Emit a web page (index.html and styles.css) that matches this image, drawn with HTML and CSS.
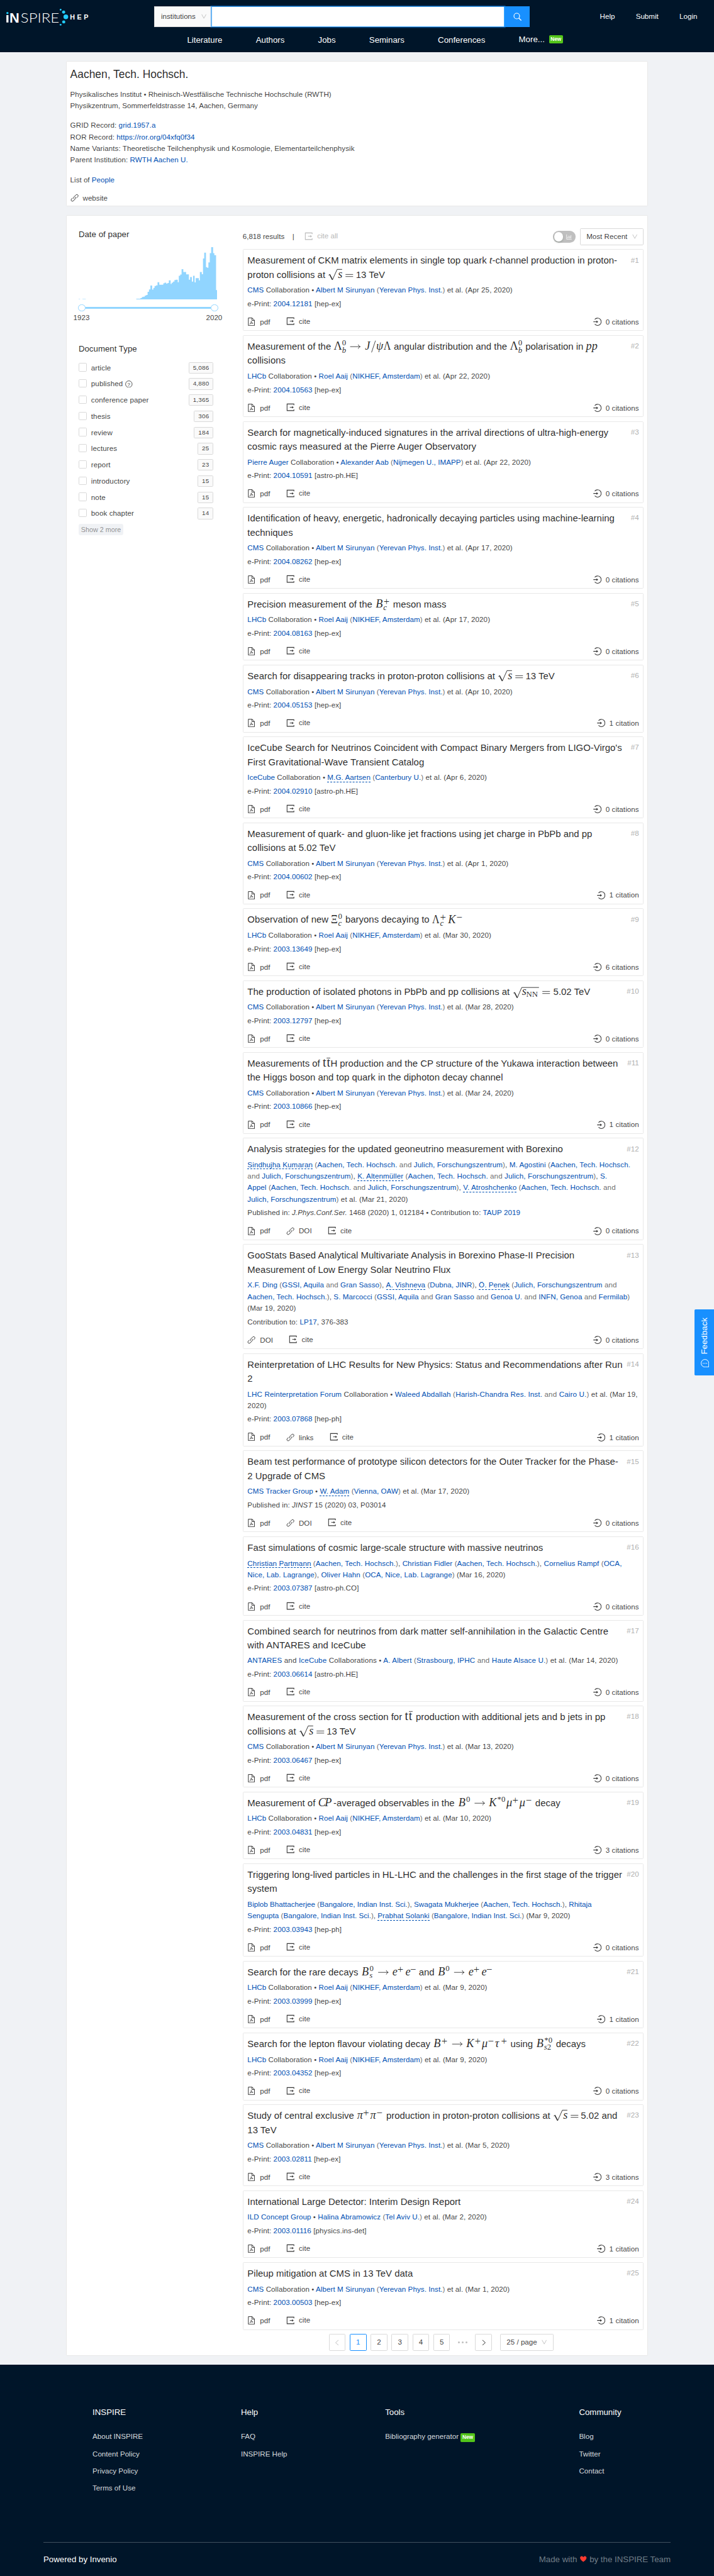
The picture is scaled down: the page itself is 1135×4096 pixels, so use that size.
FILE: index.html
```html
<!DOCTYPE html>
<html lang="en">
<head>
<meta charset="utf-8">
<title>Aachen, Tech. Hochsch. - INSPIRE</title>
<link rel="stylesheet" href="styles.css">
</head>
<body>
<svg class="defs" aria-hidden="true">
  <symbol id="pdf" viewBox="0 0 16 16"><path d="M2.2.7h7.3l4.3 4.4v10.2H2.2zM9.2.9v4.5h4.4" fill="none" stroke="currentColor" stroke-width="1.2"/><path d="M7.7 6.8c-.3 2.600-1.300 4.500-2.900 6M7.700 7c.2 2.200 1.300 3.700 3.500 4.200M5.600 11.900c1.600-1 3.400-1.400 5.400-1" fill="none" stroke="currentColor" stroke-width=".9"/></symbol>
  <symbol id="cite" viewBox="0 0 16 16"><path d="M14.700 3.900V1.700H1.600v12.600h13.100v-2.200" fill="none" stroke="currentColor" stroke-width="1.300"/><path d="M6.800 8h5" stroke="currentColor" stroke-width="1.200"/><path d="M11.200 5.800 14.400 8l-3.200 2.200z" fill="currentColor"/></symbol>
  <symbol id="link" viewBox="0 0 16 16"><path d="M6.900 9.900C5.700 8.700 5.800 7.100 7 5.900l3.200-3.300c1.200-1.200 2.700-1.300 3.800-.3 1 1.100.9 2.600-.3 3.800l-1.800 1.800M9.100 6.100c1.200 1.200 1.100 2.800-.1 4l-3.200 3.300c-1.200 1.200-2.700 1.300-3.800.3-1-1.100-.9-2.600.3-3.800l1.800-1.800" fill="none" stroke="currentColor" stroke-width="1.200"/></symbol>
  <symbol id="login" viewBox="0 0 16 16"><path d="M3 3.400A7 7 0 1 1 3 12.600" fill="none" stroke="currentColor" stroke-width="1.300"/><path d="M.3 8H7" stroke="currentColor" stroke-width="1.300"/><path d="M6.300 5.500 9.500 8l-3.200 2.500z" fill="currentColor"/></symbol>
  <symbol id="down" viewBox="0 0 10 10"><path d="M.8 1 5 8.600 9.200 1" fill="none" stroke="#bfbfbf" stroke-width="1.100"/></symbol>
  <symbol id="to" viewBox="0 0 20 10" overflow="visible"><path d="M0 5h19M15.500 1c.6 2 1.800 3.300 3.800 4-2 .7-3.200 2-3.800 4" fill="none" stroke="currentColor" stroke-width="1"/></symbol>
  <symbol id="root" viewBox="0 0 54 26"><path d="M1.500 14l2.500-1.800" fill="none" stroke="currentColor" stroke-width="1"/><path d="M3.700 12.500 8.800 22.500" stroke="currentColor" stroke-width="1.800"/><path d="M8.900 23 18 2.800h9.500" fill="none" stroke="currentColor" stroke-width="1.100"/><text x="19.500" y="19" font-style="italic">s</text><path d="M34 12.500h14.500M34 16.500h14.500" stroke="currentColor" stroke-width="1"/></symbol>
</svg>

<div class="page">
<header class="header">
  <div class="header-top">
    <svg class="logo" viewBox="0 0 180 60">
      <circle cx="14.200" cy="25" r="2.100" fill="#16c8f5"/>
      <path d="M12.200 29h4v14h-4z" fill="#fff"/>
      <text x="18" y="43" class="logo-b" textLength="19" lengthAdjust="spacingAndGlyphs">N</text>
      <text x="39.500" y="43" class="logo-l" textLength="74" lengthAdjust="spacingAndGlyphs">SPIRE</text>
      <g fill="#22ccff"><circle cx="116" cy="18.700" r="1.700"/><circle cx="121.800" cy="23.300" r="3"/><circle cx="126" cy="32.300" r="4.500"/><circle cx="122" cy="42" r="3"/><circle cx="116" cy="47.400" r="1.700"/></g>
      <text x="134" y="37" class="logo-s" textLength="35">HEP</text>
    </svg>
    <div class="search">
      <div class="search-type"><span>institutions</span><svg class="caret"><use href="#down"/></svg></div>
      <div class="search-input"></div>
      <div class="search-btn"><svg viewBox="0 0 16 16"><circle cx="6.600" cy="6.600" r="5.400" fill="none" stroke="#fff" stroke-width="1.400"/><path d="m10.500 10.500 4.700 4.700" stroke="#fff" stroke-width="1.600"/></svg></div>
    </div>
    <div class="account"><a>Help</a><a>Submit</a><a>Login</a></div>
  </div>
  <nav class="nav"><a>Literature</a><a>Authors</a><a>Jobs</a><a>Seminars</a><a>Conferences</a><a class="more">More...<b class="new">New</b></a></nav>
</header>

<main>
<section class="card info">
  <h1>Aachen, Tech. Hochsch.</h1>
  <p>Physikalisches Institut • Rheinisch-Westfälische Technische Hochschule (RWTH)<br>Physikzentrum, Sommerfeldstrasse 14, Aachen, Germany</p>
  <p class="ids">GRID Record: <a>grid.1957.a</a><br>ROR Record: <a>https://ror.org/04xfq0f34</a><br>Name Variants: Theoretische Teilchenphysik und Kosmologie, Elementarteilchenphysik<br>Parent Institution: <a>RWTH Aachen U.</a></p>
  <p>List of <a>People</a></p>
  <div class="website"><svg class="ic"><use href="#link"/></svg>website</div>
</section>

<section class="card search-page">
<aside>
  <h2>Date of paper</h2>
  <svg class="histogram" viewBox="90 180 795 246" preserveAspectRatio="none"><path fill="#91d5ff" d="M90 426v-2h8v2zM112 426v-2h19v2zM421 426V423H445V420H453V415H461V413H470V408H478V405H486V390H494V379H502V361H512V380H519V372H526V363H534V360H543V345H553V357H576V350H583V347H593V352H600V349H608V336H618V353H624V347H632V342H640V335H648V333H659V345H665V315H673V309H681V284H691V297H707V308H723V333H730V321H740V342H747V315H756V346H762V326H780V336H786V297H797V307H804V233H811V206H821V274H828V277H835V252H843V208H851V180H862V208H869V218H879V382H885V426z"/></svg>
  <div class="slider"><i></i><b></b><i></i></div>
  <div class="years"><span>1923</span><span>2020</span></div>
  <h2 class="doctype">Document Type</h2>
  <ul class="facets">
    <li><i></i>article<b>5,086</b></li>
    <li><i></i>published<svg class="help" viewBox="0 0 14 14"><circle cx="7" cy="7" r="6.300" fill="none" stroke="#444" stroke-width="1.100"/><text x="7" y="10.300" text-anchor="middle" font-size="9.500" fill="#333">?</text></svg><b>4,880</b></li>
    <li><i></i>conference paper<b>1,365</b></li>
    <li><i></i>thesis<b>306</b></li>
    <li><i></i>review<b>184</b></li>
    <li><i></i>lectures<b>25</b></li>
    <li><i></i>report<b>23</b></li>
    <li><i></i>introductory<b>15</b></li>
    <li><i></i>note<b>15</b></li>
    <li><i></i>book chapter<b>14</b></li>
  </ul>
  <span class="show-more">Show 2 more</span>
</aside>

<div class="results">
<div class="toolbar">
  <span>6,818 results</span><span class="bar">|</span>
  <span class="cite-all"><svg class="ic"><use href="#cite"/></svg>cite all</span>
  <span class="toggle"><i></i><svg viewBox="0 0 12 12"><path d="M1 1v10h10.500M3.500 9V6M5.700 9V3.500M7.900 9V5M10 9V2.500" fill="none" stroke="#fff" stroke-width="1"/></svg></span>
  <span class="select sort">Most Recent<svg class="caret"><use href="#down"/></svg></span>
</div>

<article><h3>Measurement of CKM matrix elements in single top quark <i class="m sm">t</i>-channel production in proton-<br>proton collisions at <svg class="f" width="53.500" viewBox="0 0 53.500 26"><use href="#root" width="54" height="26"/></svg>13 TeV</h3><em>#1</em>
<p><a>CMS</a> Collaboration • <a>Albert M Sirunyan</a> <s>(</s><a>Yerevan Phys. Inst.</a><s>)</s> et al. (Apr 25, 2020)</p><p>e-Print: <a>2004.12181</a> [hep-ex]</p>
<footer><span><svg class="ic"><use href="#pdf"/></svg>pdf</span><span class="c"><svg class="ic"><use href="#cite"/></svg>cite</span><span class="n"><svg class="ic"><use href="#login"/></svg>0 citations</span></footer></article>

<article><h3>Measurement of the <svg class="f" width="110" viewBox="0 0 110 26"><text x=".5" y="19">Λ</text><text class="x" x="16.500" y="11">0</text><text class="x" x="16.500" y="25"><tspan font-style="italic">b</tspan></text><use href="#to" x="32" y="8.500" width="20" height="10"/><g font-style="italic"><text x="60.500" y="19">J</text><text x="82" y="19" textLength="13.500" lengthAdjust="spacingAndGlyphs">ψ</text></g><path d="M73 24.500 80.500 2" stroke="currentColor" stroke-width="1"/><text x="96" y="19" textLength="14" lengthAdjust="spacingAndGlyphs">Λ</text></svg> angular distribution and the <svg class="f" width="25" viewBox="0 0 25 26"><text x=".5" y="19">Λ</text><text class="x" x="16.500" y="11">0</text><text class="x" x="16.500" y="25" font-style="italic">b</text></svg> polarisation in <i class="m">pp</i><br>collisions</h3><em>#2</em>
<p><a>LHCb</a> Collaboration • <a>Roel Aaij</a> <s>(</s><a>NIKHEF, Amsterdam</a><s>)</s> et al. (Apr 22, 2020)</p><p>e-Print: <a>2004.10563</a> [hep-ex]</p>
<footer><span><svg class="ic"><use href="#pdf"/></svg>pdf</span><span class="c"><svg class="ic"><use href="#cite"/></svg>cite</span><span class="n"><svg class="ic"><use href="#login"/></svg>0 citations</span></footer></article>

<article><h3>Search for magnetically-induced signatures in the arrival directions of ultra-high-energy<br>cosmic rays measured at the Pierre Auger Observatory</h3><em>#3</em>
<p><a>Pierre Auger</a> Collaboration • <a>Alexander Aab</a> <s>(</s><a>Nijmegen U., IMAPP</a><s>)</s> et al. (Apr 22, 2020)</p><p>e-Print: <a>2004.10591</a> [astro-ph.HE]</p>
<footer><span><svg class="ic"><use href="#pdf"/></svg>pdf</span><span class="c"><svg class="ic"><use href="#cite"/></svg>cite</span><span class="n"><svg class="ic"><use href="#login"/></svg>0 citations</span></footer></article>

<article><h3>Identification of heavy, energetic, hadronically decaying particles using machine-learning<br>techniques</h3><em>#4</em>
<p><a>CMS</a> Collaboration • <a>Albert M Sirunyan</a> <s>(</s><a>Yerevan Phys. Inst.</a><s>)</s> et al. (Apr 17, 2020)</p><p>e-Print: <a>2004.08262</a> [hep-ex]</p>
<footer><span><svg class="ic"><use href="#pdf"/></svg>pdf</span><span class="c"><svg class="ic"><use href="#cite"/></svg>cite</span><span class="n"><svg class="ic"><use href="#login"/></svg>0 citations</span></footer></article>

<article><h3>Precision measurement of the <svg class="f" width="29.700" viewBox="0 0 29.700 26"><text x="1.500" y="19" font-style="italic">B</text><text class="pm" x="16.500" y="14.500">+</text><text class="x" x="16" y="24.500" font-style="italic">c</text></svg> meson mass</h3><em>#5</em>
<p><a>LHCb</a> Collaboration • <a>Roel Aaij</a> <s>(</s><a>NIKHEF, Amsterdam</a><s>)</s> et al. (Apr 17, 2020)</p><p>e-Print: <a>2004.08163</a> [hep-ex]</p>
<footer><span><svg class="ic"><use href="#pdf"/></svg>pdf</span><span class="c"><svg class="ic"><use href="#cite"/></svg>cite</span><span class="n"><svg class="ic"><use href="#login"/></svg>0 citations</span></footer></article>

<article><h3>Search for disappearing tracks in proton-proton collisions at <svg class="f" width="53.500" viewBox="0 0 53.500 26"><use href="#root" width="54" height="26"/></svg>13 TeV</h3><em>#6</em>
<p><a>CMS</a> Collaboration • <a>Albert M Sirunyan</a> <s>(</s><a>Yerevan Phys. Inst.</a><s>)</s> et al. (Apr 10, 2020)</p><p>e-Print: <a>2004.05153</a> [hep-ex]</p>
<footer><span><svg class="ic"><use href="#pdf"/></svg>pdf</span><span class="c"><svg class="ic"><use href="#cite"/></svg>cite</span><span class="n"><svg class="ic"><use href="#login"/></svg>1 citation</span></footer></article>

<article><h3>IceCube Search for Neutrinos Coincident with Compact Binary Mergers from LIGO-Virgo's<br>First Gravitational-Wave Transient Catalog</h3><em>#7</em>
<p><a>IceCube</a> Collaboration • <a class="d">M.G. Aartsen</a> <s>(</s><a>Canterbury U.</a><s>)</s> et al. (Apr 6, 2020)</p><p>e-Print: <a>2004.02910</a> [astro-ph.HE]</p>
<footer><span><svg class="ic"><use href="#pdf"/></svg>pdf</span><span class="c"><svg class="ic"><use href="#cite"/></svg>cite</span><span class="n"><svg class="ic"><use href="#login"/></svg>0 citations</span></footer></article>

<article><h3>Measurement of quark- and gluon-like jet fractions using jet charge in PbPb and pp<br>collisions at 5.02 TeV</h3><em>#8</em>
<p><a>CMS</a> Collaboration • <a>Albert M Sirunyan</a> <s>(</s><a>Yerevan Phys. Inst.</a><s>)</s> et al. (Apr 1, 2020)</p><p>e-Print: <a>2004.00602</a> [hep-ex]</p>
<footer><span><svg class="ic"><use href="#pdf"/></svg>pdf</span><span class="c"><svg class="ic"><use href="#cite"/></svg>cite</span><span class="n"><svg class="ic"><use href="#login"/></svg>1 citation</span></footer></article>

<article><h3>Observation of new <svg class="f" width="22.400" viewBox="0 0 22.400 26"><text x="0" y="19" textLength="13" lengthAdjust="spacingAndGlyphs">Ξ</text><text class="x" x="13.800" y="11">0</text><text class="x" x="13.800" y="24.500" font-style="italic">c</text></svg> baryons decaying to <svg class="f" width="58" viewBox="0 0 58 26"><text x="0" y="19" textLength="14" lengthAdjust="spacingAndGlyphs">Λ</text><text class="pm" x="15" y="14.500">+</text><text class="x" x="15" y="24.500" font-style="italic">c</text><text x="30.500" y="19" font-style="italic">K</text><text class="pm" x="46.500" y="14.500">−</text></svg></h3><em>#9</em>
<p><a>LHCb</a> Collaboration • <a>Roel Aaij</a> <s>(</s><a>NIKHEF, Amsterdam</a><s>)</s> et al. (Mar 30, 2020)</p><p>e-Print: <a>2003.13649</a> [hep-ex]</p>
<footer><span><svg class="ic"><use href="#pdf"/></svg>pdf</span><span class="c"><svg class="ic"><use href="#cite"/></svg>cite</span><span class="n"><svg class="ic"><use href="#login"/></svg>6 citations</span></footer></article>

<article><h3>The production of isolated photons in PbPb and pp collisions at <svg class="f" width="78.500" viewBox="0 0 78.500 26"><path d="M2.500 16l2.500-1.800" fill="none" stroke="currentColor" stroke-width="1"/><path d="M4.700 14.500 9.800 24.500" stroke="currentColor" stroke-width="1.800"/><path d="M9.900 25 18.500 5h33" fill="none" stroke="currentColor" stroke-width="1.100"/><text x="19" y="19" font-style="italic">s</text><text class="x" x="27" y="22.500">NN</text><path d="M58 12.500h14.500M58 16.500h14.500" stroke="currentColor" stroke-width="1"/></svg>5.02 TeV</h3><em>#10</em>
<p><a>CMS</a> Collaboration • <a>Albert M Sirunyan</a> <s>(</s><a>Yerevan Phys. Inst.</a><s>)</s> et al. (Mar 28, 2020)</p><p>e-Print: <a>2003.12797</a> [hep-ex]</p>
<footer><span><svg class="ic"><use href="#pdf"/></svg>pdf</span><span class="c"><svg class="ic"><use href="#cite"/></svg>cite</span><span class="n"><svg class="ic"><use href="#login"/></svg>0 citations</span></footer></article>

<article><h3>Measurements of <svg class="f" width="15" viewBox="0 0 15 26"><text x="0" y="19" font-size="24">t</text><text x="7.700" y="19" font-size="24">t</text><path d="M7.500 2.800h7" stroke="currentColor"/></svg>H production and the CP structure of the Yukawa interaction between<br>the Higgs boson and top quark in the diphoton decay channel</h3><em>#11</em>
<p><a>CMS</a> Collaboration • <a>Albert M Sirunyan</a> <s>(</s><a>Yerevan Phys. Inst.</a><s>)</s> et al. (Mar 24, 2020)</p><p>e-Print: <a>2003.10866</a> [hep-ex]</p>
<footer><span><svg class="ic"><use href="#pdf"/></svg>pdf</span><span class="c"><svg class="ic"><use href="#cite"/></svg>cite</span><span class="n"><svg class="ic"><use href="#login"/></svg>1 citation</span></footer></article>

<article><h3>Analysis strategies for the updated geoneutrino measurement with Borexino</h3><em>#12</em>
<p class="w2"><a class="d">Sindhujha Kumaran</a> <s>(</s><a>Aachen, Tech. Hochsch.</a> <s>and</s> <a>Julich, Forschungszentrum</a><s>)</s>, <a>M. Agostini</a> <s>(</s><a>Aachen, Tech. Hochsch.</a><br><s>and</s> <a>Julich, Forschungszentrum</a><s>)</s>, <a class="d">K. Altenmüller</a> <s>(</s><a>Aachen, Tech. Hochsch.</a> <s>and</s> <a>Julich, Forschungszentrum</a><s>)</s>, <a>S.<br>Appel</a> <s>(</s><a>Aachen, Tech. Hochsch.</a> <s>and</s> <a>Julich, Forschungszentrum</a><s>)</s>, <a class="d">V. Atroshchenko</a> <s>(</s><a>Aachen, Tech. Hochsch.</a> <s>and</s><br><a>Julich, Forschungszentrum</a><s>)</s> et al. (Mar 21, 2020)</p><p>Published in: <i>J.Phys.Conf.Ser.</i> 1468 (2020) 1, 012184 • Contribution to: <a>TAUP 2019</a></p>
<footer><span><svg class="ic"><use href="#pdf"/></svg>pdf</span><span><svg class="ic"><use href="#link"/></svg>DOI</span><span class="c"><svg class="ic"><use href="#cite"/></svg>cite</span><span class="n"><svg class="ic"><use href="#login"/></svg>0 citations</span></footer></article>

<article><h3>GooStats Based Analytical Multivariate Analysis in Borexino Phase-II Precision<br>Measurement of Low Energy Solar Neutrino Flux</h3><em>#13</em>
<p><a>X.F. Ding</a> <s>(</s><a>GSSI, Aquila</a> <s>and</s> <a>Gran Sasso</a><s>)</s>, <a class="d">A. Vishneva</a> <s>(</s><a>Dubna, JINR</a><s>)</s>, <a class="d">Ö. Penek</a> <s>(</s><a>Julich, Forschungszentrum</a> <s>and</s><br><a>Aachen, Tech. Hochsch.</a><s>)</s>, <a>S. Marcocci</a> <s>(</s><a>GSSI, Aquila</a> <s>and</s> <a>Gran Sasso</a> <s>and</s> <a>Genoa U.</a> <s>and</s> <a>INFN, Genoa</a> <s>and</s> <a>Fermilab</a><s>)</s><br>(Mar 19, 2020)</p><p>Contribution to: <a>LP17</a>, 376-383</p>
<footer><span><svg class="ic"><use href="#link"/></svg>DOI</span><span class="c"><svg class="ic"><use href="#cite"/></svg>cite</span><span class="n"><svg class="ic"><use href="#login"/></svg>0 citations</span></footer></article>

<article><h3>Reinterpretation of LHC Results for New Physics: Status and Recommendations after Run<br>2</h3><em>#14</em>
<p class="w3"><a>LHC Reinterpretation Forum</a> Collaboration • <a>Waleed Abdallah</a> <s>(</s><a>Harish-Chandra Res. Inst.</a> <s>and</s> <a>Cairo U.</a><s>)</s> et al. (Mar 19,<br>2020)</p><p>e-Print: <a>2003.07868</a> [hep-ph]</p>
<footer><span class="c"><svg class="ic"><use href="#pdf"/></svg>pdf</span><span><svg class="ic"><use href="#link"/></svg>links</span><span class="c"><svg class="ic"><use href="#cite"/></svg>cite</span><span class="n"><svg class="ic"><use href="#login"/></svg>1 citation</span></footer></article>

<article><h3>Beam test performance of prototype silicon detectors for the Outer Tracker for the Phase-<br>2 Upgrade of CMS</h3><em>#15</em>
<p><a>CMS Tracker Group</a> • <a class="d">W. Adam</a> <s>(</s><a>Vienna, OAW</a><s>)</s> et al. (Mar 17, 2020)</p><p>Published in: <i>JINST</i> 15 (2020) 03, P03014</p>
<footer><span><svg class="ic"><use href="#pdf"/></svg>pdf</span><span><svg class="ic"><use href="#link"/></svg>DOI</span><span class="c"><svg class="ic"><use href="#cite"/></svg>cite</span><span class="n"><svg class="ic"><use href="#login"/></svg>0 citations</span></footer></article>

<article><h3>Fast simulations of cosmic large-scale structure with massive neutrinos</h3><em>#16</em>
<p class="w2"><a class="d">Christian Partmann</a> <s>(</s><a>Aachen, Tech. Hochsch.</a><s>)</s>, <a>Christian Fidler</a> <s>(</s><a>Aachen, Tech. Hochsch.</a><s>)</s>, <a>Cornelius Rampf</a> <s>(</s><a>OCA,<br>Nice, Lab. Lagrange</a><s>)</s>, <a>Oliver Hahn</a> <s>(</s><a>OCA, Nice, Lab. Lagrange</a><s>)</s> (Mar 16, 2020)</p><p>e-Print: <a>2003.07387</a> [astro-ph.CO]</p>
<footer><span><svg class="ic"><use href="#pdf"/></svg>pdf</span><span class="c"><svg class="ic"><use href="#cite"/></svg>cite</span><span class="n"><svg class="ic"><use href="#login"/></svg>0 citations</span></footer></article>

<article><h3>Combined search for neutrinos from dark matter self-annihilation in the Galactic Centre<br>with ANTARES and IceCube</h3><em>#17</em>
<p class="w3"><a>ANTARES</a> and <a>IceCube</a> Collaborations • <a>A. Albert</a> <s>(</s><a>Strasbourg, IPHC</a> <s>and</s> <a>Haute Alsace U.</a><s>)</s> et al. (Mar 14, 2020)</p><p>e-Print: <a>2003.06614</a> [astro-ph.HE]</p>
<footer><span><svg class="ic"><use href="#pdf"/></svg>pdf</span><span class="c"><svg class="ic"><use href="#cite"/></svg>cite</span><span class="n"><svg class="ic"><use href="#login"/></svg>0 citations</span></footer></article>

<article><h3>Measurement of the cross section for <svg class="f" width="16.300" viewBox="0 0 16.300 26"><text x=".5" y="19" font-size="24">t</text><text x="8.200" y="19" font-size="24">t</text><path d="M8.500 2.800h7" stroke="currentColor"/></svg> production with additional jets and b jets in pp<br>collisions at <svg class="f" width="53.500" viewBox="0 0 53.500 26"><use href="#root" width="54" height="26"/></svg>13 TeV</h3><em>#18</em>
<p><a>CMS</a> Collaboration • <a>Albert M Sirunyan</a> <s>(</s><a>Yerevan Phys. Inst.</a><s>)</s> et al. (Mar 13, 2020)</p><p>e-Print: <a>2003.06467</a> [hep-ex]</p>
<footer><span><svg class="ic"><use href="#pdf"/></svg>pdf</span><span class="c"><svg class="ic"><use href="#cite"/></svg>cite</span><span class="n"><svg class="ic"><use href="#login"/></svg>0 citations</span></footer></article>

<article><h3>Measurement of <svg class="f" width="29.500" viewBox="0 0 29.500 26"><g font-style="italic"><text x="1" y="19">C</text><text x="13.500" y="19">P</text></g></svg>-averaged observables in the <svg class="f" width="144.400" viewBox="0 0 144.400 26"><g font-style="italic"><text x="2" y="19">B</text><text x="60.500" y="19">K</text><text x="94" y="19">μ</text><text x="119" y="19">μ</text></g><text class="x" x="16.800" y="11">0</text><use href="#to" x="33" y="8.500" width="20" height="10"/><text class="x" x="76.500" y="11">*0</text><text class="pm" x="105.500" y="14.500">+</text><text class="pm" x="130.800" y="14.500">−</text></svg> decay</h3><em>#19</em>
<p><a>LHCb</a> Collaboration • <a>Roel Aaij</a> <s>(</s><a>NIKHEF, Amsterdam</a><s>)</s> et al. (Mar 10, 2020)</p><p>e-Print: <a>2003.04831</a> [hep-ex]</p>
<footer><span><svg class="ic"><use href="#pdf"/></svg>pdf</span><span class="c"><svg class="ic"><use href="#cite"/></svg>cite</span><span class="n"><svg class="ic"><use href="#login"/></svg>3 citations</span></footer></article>

<article><h3>Triggering long-lived particles in HL-LHC and the challenges in the first stage of the trigger<br>system</h3><em>#20</em>
<p class="w1"><a>Biplob Bhattacherjee</a> <s>(</s><a>Bangalore, Indian Inst. Sci.</a><s>)</s>, <a>Swagata Mukherjee</a> <s>(</s><a>Aachen, Tech. Hochsch.</a><s>)</s>, <a>Rhitaja<br>Sengupta</a> <s>(</s><a>Bangalore, Indian Inst. Sci.</a><s>)</s>, <a class="d">Prabhat Solanki</a> <s>(</s><a>Bangalore, Indian Inst. Sci.</a><s>)</s> (Mar 9, 2020)</p><p>e-Print: <a>2003.03943</a> [hep-ph]</p>
<footer><span><svg class="ic"><use href="#pdf"/></svg>pdf</span><span class="c"><svg class="ic"><use href="#cite"/></svg>cite</span><span class="n"><svg class="ic"><use href="#login"/></svg>0 citations</span></footer></article>

<article><h3>Search for the rare decays <svg class="f" width="106" viewBox="0 0 106 26"><g font-style="italic"><text x="1.300" y="19">B</text><text class="x" x="16" y="24.500">s</text><text x="60" y="19">e</text><text x="84.800" y="19">e</text></g><text class="x" x="16.300" y="11">0</text><use href="#to" x="32.700" y="8.500" width="20" height="10"/><text class="pm" x="69.500" y="14.500">+</text><text class="pm" x="94" y="14.500">−</text></svg> and <svg class="f" width="105" viewBox="0 0 105 26"><g font-style="italic"><text x="1.500" y="19">B</text><text x="60" y="19">e</text><text x="84.800" y="19">e</text></g><text class="x" x="16" y="11">0</text><use href="#to" x="32.300" y="8.500" width="20" height="10"/><text class="pm" x="69.500" y="14.500">+</text><text class="pm" x="94" y="14.500">−</text></svg></h3><em>#21</em>
<p><a>LHCb</a> Collaboration • <a>Roel Aaij</a> <s>(</s><a>NIKHEF, Amsterdam</a><s>)</s> et al. (Mar 9, 2020)</p><p>e-Print: <a>2003.03999</a> [hep-ex]</p>
<footer><span><svg class="ic"><use href="#pdf"/></svg>pdf</span><span class="c"><svg class="ic"><use href="#cite"/></svg>cite</span><span class="n"><svg class="ic"><use href="#login"/></svg>1 citation</span></footer></article>

<article><h3>Search for the lepton flavour violating decay <svg class="f" width="143.400" viewBox="0 0 143.400 26"><g font-style="italic"><text x="1.500" y="19">B</text><text x="64" y="19">K</text><text x="94" y="19">μ</text><text x="119" y="19">τ</text></g><use href="#to" x="37" y="8.500" width="20" height="10"/><text class="pm" x="16.500" y="14.500">+</text><text class="pm" x="80.500" y="14.500">+</text><text class="pm" x="105.300" y="14.500">−</text><text class="pm" x="130.500" y="14.500">+</text></svg> using <svg class="f" width="34" viewBox="0 0 34 26"><text x="2" y="19" font-style="italic">B</text><text class="x" x="17.300" y="11">*0</text><text class="x" x="16.500" y="24.500"><tspan font-style="italic">s</tspan>2</text></svg> decays</h3><em>#22</em>
<p><a>LHCb</a> Collaboration • <a>Roel Aaij</a> <s>(</s><a>NIKHEF, Amsterdam</a><s>)</s> et al. (Mar 9, 2020)</p><p>e-Print: <a>2003.04352</a> [hep-ex]</p>
<footer><span><svg class="ic"><use href="#pdf"/></svg>pdf</span><span class="c"><svg class="ic"><use href="#cite"/></svg>cite</span><span class="n"><svg class="ic"><use href="#login"/></svg>0 citations</span></footer></article>

<article><h3>Study of central exclusive <svg class="f" width="51.600" viewBox="0 0 51.600 26"><g font-style="italic"><text x="1" y="19">π</text><text x="26" y="19">π</text></g><text class="pm" x="12.300" y="14.500">+</text><text class="pm" x="38" y="14.500">−</text></svg> production in proton-proton collisions at <svg class="f" width="53.500" viewBox="0 0 53.500 26"><use href="#root" width="54" height="26"/></svg>5.02 and<br>13 TeV</h3><em>#23</em>
<p><a>CMS</a> Collaboration • <a>Albert M Sirunyan</a> <s>(</s><a>Yerevan Phys. Inst.</a><s>)</s> et al. (Mar 5, 2020)</p><p>e-Print: <a>2003.02811</a> [hep-ex]</p>
<footer><span><svg class="ic"><use href="#pdf"/></svg>pdf</span><span class="c"><svg class="ic"><use href="#cite"/></svg>cite</span><span class="n"><svg class="ic"><use href="#login"/></svg>3 citations</span></footer></article>

<article><h3>International Large Detector: Interim Design Report</h3><em>#24</em>
<p><a>ILD Concept Group</a> • <a>Halina Abramowicz</a> <s>(</s><a>Tel Aviv U.</a><s>)</s> et al. (Mar 2, 2020)</p><p>e-Print: <a>2003.01116</a> [physics.ins-det]</p>
<footer><span><svg class="ic"><use href="#pdf"/></svg>pdf</span><span class="c"><svg class="ic"><use href="#cite"/></svg>cite</span><span class="n"><svg class="ic"><use href="#login"/></svg>1 citation</span></footer></article>

<article><h3>Pileup mitigation at CMS in 13 TeV data</h3><em>#25</em>
<p><a>CMS</a> Collaboration • <a>Albert M Sirunyan</a> <s>(</s><a>Yerevan Phys. Inst.</a><s>)</s> et al. (Mar 1, 2020)</p><p>e-Print: <a>2003.00503</a> [hep-ex]</p>
<footer><span><svg class="ic"><use href="#pdf"/></svg>pdf</span><span class="c"><svg class="ic"><use href="#cite"/></svg>cite</span><span class="n"><svg class="ic"><use href="#login"/></svg>1 citation</span></footer></article>

<div class="pagination">
  <span class="pg"><svg viewBox="0 0 12 12"><path d="M8.500 1 3 6l5.500 5" fill="none" stroke="#bfbfbf" stroke-width="1.200"/></svg></span><span class="pg on">1</span><span class="pg">2</span><span class="pg">3</span><span class="pg">4</span><span class="pg">5</span>
  <span class="dots"><i></i><i></i><i></i></span>
  <span class="pg"><svg viewBox="0 0 12 12"><path d="M3.500 1 9 6l-5.500 5" fill="none" stroke="#333" stroke-width="1.200"/></svg></span>
  <span class="select size">25 / page<svg class="caret"><use href="#down"/></svg></span>
</div>
</div>
</section>
</main>

<div class="feedback"><svg viewBox="0 0 16 16"><path d="M15.300 15.300H8A7.300 7.300 0 1 1 15.300 8z" fill="none" stroke="#fff" stroke-width="1.200"/><g fill="#fff"><circle cx="4.700" cy="8" r=".9"/><circle cx="8" cy="8" r=".9"/><circle cx="11.300" cy="8" r=".9"/></g></svg><span>Feedback</span></div>

<footer class="site-footer">
  <div class="columns">
    <div><h4>INSPIRE</h4><a>About INSPIRE</a><a>Content Policy</a><a>Privacy Policy</a><a>Terms of Use</a></div>
    <div><h4>Help</h4><a>FAQ</a><a>INSPIRE Help</a></div>
    <div><h4>Tools</h4><a>Bibliography generator<b class="new">New</b></a></div>
    <div><h4>Community</h4><a>Blog</a><a>Twitter</a><a>Contact</a></div>
  </div>
  <div class="bottom"><span>Powered by Invenio</span><span class="made">Made with <svg class="heart" viewBox="0 0 16 14"><path fill="#ff3b30" d="M8 13.500C5 11 .8 8 .8 4.400.8 2.200 2.500.7 4.400.7 6 .7 7.400 1.600 8 3 8.600 1.600 10 .7 11.600.7c1.900 0 3.600 1.500 3.600 3.700 0 3.600-4.200 6.600-7.200 9.100z"/></svg> by the INSPIRE Team</span></div>
</footer>
</div>
</body>
</html>
```
FILE: styles.css
```css
html { background: #001529; }
body { margin: 0; height: 4096px; overflow: hidden; }
.page {
  zoom: 0.8307;
  position: relative;
  height: 4930px;
  overflow: hidden;
  font: 14px/22px "Liberation Sans", Arial, sans-serif;
  color: rgba(0, 0, 0, 0.78);
  background: #f0f2f5;
}
*, *::before, *::after { box-sizing: border-box; }
h1, h2, h3, h4, p, ul { margin: 0; padding: 0; font-weight: 400; }
a { color: #0050b3; }
s { text-decoration: none; color: rgba(0, 0, 0, 0.62); }
svg { flex: none; }
.defs { display: none; }
.ic { width: 16px; height: 16px; margin-right: 8px; }
.caret { width: 10px; height: 10px; }

/* Header */
.header { height: 100px; background: #001529; overflow: hidden; }
.header-top { display: grid; grid-template-columns: 295px 719px 1fr; align-items: center; height: 64px; }
.logo { width: 180px; height: 60px; margin-bottom: 4px; }
.logo-b { font: 700 27px "Liberation Sans", sans-serif; fill: #fff; }
.logo-l { font: 300 27px Lato, "Liberation Sans", sans-serif; fill: #fff; }
.logo-s { font: 700 13px "Liberation Sans", sans-serif; fill: #fff; }
.search { display: flex; height: 40px; }
.search-type { width: 110px; background: #fafafa; border: 1px solid #d9d9d9; display: flex; align-items: center; justify-content: space-between; padding: 0 9px 0 12px; }
.search-input { flex: 1; background: #fff; border: 1px solid #40a9ff; box-shadow: 0 0 0 2px rgba(24, 144, 255, 0.3); }
.search-btn { width: 48px; background: #1890ff; display: grid; place-items: center; }
.search-btn svg { width: 16px; height: 16px; }
.account { display: flex; justify-content: flex-end; gap: 40px; padding-right: 32px; }
.account a, .nav a { color: #fff; }
.nav { display: flex; gap: 64px; padding: 2px 0 0 358px; font-size: 16px; white-space: nowrap; }
.more { display: flex; align-items: flex-start; margin-top: -1px; }
.new { display: inline-block; background: #52c41a; color: #fff; font-size: 10px; line-height: 16px; height: 16px; width: 27px; text-align: center; border-radius: 2px; margin-left: 8px; margin-top: 2px; }

/* Cards */
.card { width: 1114px; margin: 17px auto 0; background: #fff; border: 1px solid #e8e8e8; border-radius: 2px; }
.info { height: 278px; padding: 9px 7px 0; }
.info h1 { font-size: 21px; line-height: 31px; color: rgba(0, 0, 0, 0.85); margin-bottom: 11px; }
.info p { margin-bottom: 16px; }
.info .ids { letter-spacing: 0.08px; }
.info p:last-of-type { margin-bottom: 13px; }
.website { display: flex; align-items: center; }
.website svg { margin-bottom: 2px; }
.search-page { display: flex; height: 4097px; padding: 24px 7px 0 23px; }

/* Filters */
aside { width: 265px; margin-right: 49px; }
h2 { font-size: 16px; line-height: 24px; color: rgba(0, 0, 0, 0.85); }
.histogram { display: block; width: 265px; height: 100px; margin-top: 12px; }
.slider { display: flex; align-items: center; width: 268px; height: 14px; margin: 9px 0 0 -1px; }
.slider i { width: 14px; height: 14px; border: 2px solid #91d5ff; border-radius: 50%; background: #fff; }
.slider b { flex: 1; height: 4px; background: #91d5ff; }
.years { display: flex; justify-content: space-between; margin: 1px -10px 0; }
.doctype { margin-top: 37px; }
.facets { list-style: none; margin-top: 13px; }
.facets li { display: flex; align-items: center; height: 22px; margin-bottom: 9px; letter-spacing: 0.1px; }
.facets i { width: 16px; height: 16px; border: 1px solid #d9d9d9; border-radius: 2px; margin: 0 8px 2px 0; }
.facets b { margin: 0 7px 0 auto; height: 22px; padding: 0 7px; border: 1px solid #d9d9d9; border-radius: 2px; background: #fafafa; font-weight: 400; font-size: 12px; line-height: 20px; letter-spacing: 0.2px; }
.help { width: 14px; height: 14px; margin-left: 5px; }
.show-more { display: inline-block; width: 86px; height: 22px; border-radius: 4px; background: #f0f2f5; color: rgba(0, 0, 0, 0.45); font-size: 13px; text-align: center; }

/* Results */
.results { width: 768px; }
.toolbar { display: flex; align-items: center; height: 32px; margin-bottom: 8px; }
.bar { margin-left: 15px; }
.cite-all { display: flex; align-items: center; color: #b8b8b8; margin: 0 auto 2px 20px; }
.toggle { display: flex; align-items: center; justify-content: space-between; width: 44px; height: 22px; border-radius: 11px; background: #bfbfbf; padding: 0 8px 0 2px; margin-right: 8px; }
.toggle i { width: 18px; height: 18px; border-radius: 50%; background: #fff; box-shadow: 0 2px 4px rgba(0, 35, 11, 0.2); }
.toggle svg { width: 11px; height: 11px; }
.select { display: flex; align-items: center; justify-content: space-between; height: 32px; padding: 0 11px; border: 1px solid #d9d9d9; border-radius: 2px; background: #fff; }
.sort { width: 122px; }
.size { width: 102px; margin-left: 8px; }

article { display: grid; grid-template-columns: 1fr auto; padding: 7.200px 8px 4.800px; border: 1px solid #e8e8e8; border-radius: 2px; margin-bottom: 8px; white-space: nowrap; }
article h3 { font-size: 18px; line-height: 27px; color: rgba(0, 0, 0, 0.85); margin-bottom: 5px; }
article em { font-style: normal; color: #b0b0b0; padding-top: 1.500px; }
article p, article footer { grid-column: 1 / -1; letter-spacing: 0.08px; }
article .w1 { letter-spacing: 0.03px; }
article .w2 { letter-spacing: 0.12px; }
article .w3 { letter-spacing: 0.18px; }
article p + p { margin-top: 4px; }
article footer { display: flex; margin-top: 13.100px; gap: 30.500px; }
article footer span { display: flex; align-items: center; }
article footer svg { margin-bottom: 1px; }
article .c { margin-top: -2px; }
article .n { margin-left: auto; }
.d { border-bottom: 1px dashed #0050b3; display: inline-block; line-height: 15px; }

/* Formulas */
.m, .f text, #root text { font-family: "Liberation Serif", "Times New Roman", serif; }
.m { font-size: 22px; line-height: 0; }
.sm { font-size: 21px; }
.f { height: 26px; vertical-align: -7px; overflow: visible; font-size: 22px; fill: currentColor; }
.f .x { font-size: 15.400px; }
.f .pm { font-size: 20px; }

.pagination { display: flex; gap: 8px; padding-left: 165px; }
.pg { width: 32px; height: 32px; border: 1px solid #d9d9d9; border-radius: 2px; display: grid; place-items: center; }
.pg svg { width: 12px; height: 12px; }
.on { border-color: #1890ff; color: #1890ff; }
.dots { width: 32px; display: flex; align-items: center; justify-content: center; gap: 3px; }
.dots i { width: 4px; height: 4px; border-radius: 50%; background: #bfbfbf; }

/* Feedback tab over the page edge */
.feedback { position: absolute; right: 0; top: 2506px; width: 37px; height: 127px; border-radius: 2px 0 0 2px; background: #1890ff; color: #fff; font-size: 16px; display: flex; flex-direction: column-reverse; align-items: center; justify-content: center; gap: 9px; padding-left: 2px; }
.feedback svg { width: 16px; height: 16px; }
.feedback span { writing-mode: vertical-rl; transform: rotate(180deg); }

/* Footer */
.site-footer { margin-top: 17px; height: 405px; background: #001529; color: #fff; padding: 0 83px; }
.columns { display: grid; grid-template-columns: 284px 276px 371px auto; padding: 80px 0 0 94px; height: 340px; }
.columns h4 { font-size: 16px; line-height: 24px; margin-bottom: 23px; }
.columns a { display: flex; color: rgba(255, 255, 255, 0.85); height: 22px; margin-bottom: 11px; }
.columns .new { margin: 5px 0 0 4px; }
.bottom { display: flex; justify-content: space-between; border-top: 1px solid rgba(255, 255, 255, 0.25); padding-top: 20px; font-size: 16px; line-height: 24px; }
.made { color: rgba(255, 255, 255, 0.45); }
.heart { width: 15px; height: 12px; }
```
